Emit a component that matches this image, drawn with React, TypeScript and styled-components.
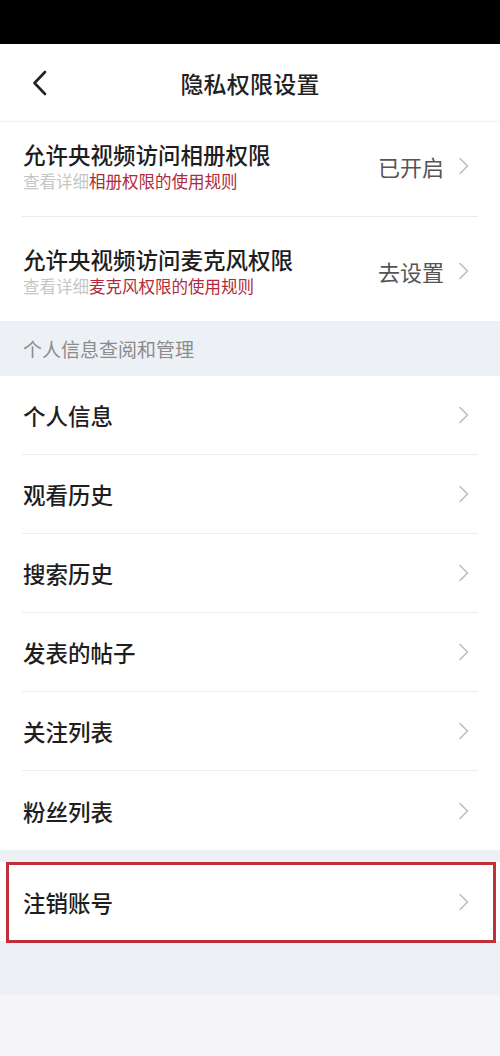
import React from "react";
import styled, { createGlobalStyle } from "styled-components";

const GlobalStyle = createGlobalStyle`
  html, body { margin: 0; padding: 0; }
  body {
    font-family: "Noto Sans CJK SC", "Noto Sans", sans-serif;
    background: #f5f5f7;
    -webkit-font-smoothing: antialiased;
  }
`;

const Page = styled.div`
  width: 500px;
  min-height: 1056px;
  display: flex;
  flex-direction: column;
  background: #f5f5f7;
`;

const StatusBar = styled.div`
  height: 44px;
  background: #000;
`;

const Header = styled.header`
  height: 77px;
  display: flex;
  align-items: center;
  justify-content: center;
  position: relative;
  background: #fff;
  border-bottom: 1px solid #f2f2f2;
`;

const BackButton = styled.button`
  position: absolute;
  left: 26px;
  top: 50%;
  transform: translateY(-50%);
  width: 28px;
  height: 36px;
  padding: 0;
  border: 0;
  background: transparent;
  display: flex;
  align-items: center;
  justify-content: center;
`;

const Title = styled.h1`
  margin: 0;
  font-size: 23px;
  font-weight: 500;
  color: #222;
  letter-spacing: 0.2px;
`;

const Group = styled.section`
  background: #fff;
  padding: 0 22px;
`;

const PermRow = styled.div<{ $pt: number; $pb: number; $h: number; $divider?: boolean }>`
  height: ${(p) => p.$h}px;
  box-sizing: border-box;
  padding: ${(p) => p.$pt}px 8px ${(p) => p.$pb}px 1px;
  display: flex;
  align-items: center;
  border-bottom: ${(p) => (p.$divider ? "1px solid #ececec" : "0")};
`;

const PermText = styled.div`
  flex: 1;
  display: flex;
  flex-direction: column;
`;

const PermTitle = styled.div`
  font-size: 22.5px;
  font-weight: 500;
  color: #1e1e1e;
  line-height: 26px;
`;

const PermSub = styled.div`
  font-size: 16.5px;
  line-height: 22px;
  color: #c6c6c6;
  margin-top: 3px;
`;

const RuleLink = styled.span`
  color: #b02a3b;
`;

const Value = styled.span`
  font-size: 22px;
  color: #555;
  margin-right: 14px;
`;

const SectionHeader = styled.div`
  height: 55px;
  display: flex;
  align-items: center;
  padding-left: 23px;
  background: #edf0f5;
  font-size: 19px;
  color: #8c8c8c;
`;

const ListRow = styled.div<{ $divider?: boolean }>`
  height: 79px;
  box-sizing: border-box;
  display: flex;
  align-items: center;
  padding: 0 8px 0 1px;
  border-bottom: ${(p) => (p.$divider ? "1px solid #ededed" : "0")};
`;

const ListLabel = styled.span`
  flex: 1;
  font-size: 22.5px;
  font-weight: 500;
  color: #1e1e1e;
`;

const Gap = styled.div<{ $h: number }>`
  height: ${(p) => p.$h}px;
  background: #edf0f5;
`;

const DangerGroup = styled(Group)`
  position: relative;
`;

const Highlight = styled.div`
  position: absolute;
  left: 6px;
  right: 4px;
  top: 0;
  bottom: -2px;
  border: 3px solid #c22f3b;
  pointer-events: none;
`;

const Filler = styled.div`
  flex: 1;
  background: #f5f5f7;
`;

const Chevron = () => (
  <svg width="12" height="18" viewBox="0 0 12 18" fill="none">
    <path d="M2 1.5 L9.5 9 L2 16.5" stroke="#bdbdbd" strokeWidth="1.6" strokeLinecap="round" strokeLinejoin="round" />
  </svg>
);

const BackIcon = () => (
  <svg width="16" height="26" viewBox="0 0 16 26" fill="none">
    <path d="M13 2 L2.5 13 L13 24" stroke="#222" strokeWidth="2.6" strokeLinecap="round" strokeLinejoin="round" />
  </svg>
);

const items = ["个人信息", "观看历史", "搜索历史", "发表的帖子", "关注列表", "粉丝列表"];

export default function App() {
  return (
    <>
      <GlobalStyle />
      <Page>
        <StatusBar />
        <Header>
          <BackButton aria-label="返回">
            <BackIcon />
          </BackButton>
          <Title>隐私权限设置</Title>
        </Header>
        <Group>
          <PermRow $h={95} $pt={0} $pb={6} $divider>
            <PermText>
              <PermTitle>允许央视频访问相册权限</PermTitle>
              <PermSub>
                查看详细<RuleLink>相册权限的使用规则</RuleLink>
              </PermSub>
            </PermText>
            <Value>已开启</Value>
            <Chevron />
          </PermRow>
          <PermRow $h={104} $pt={4} $pb={0}>
            <PermText>
              <PermTitle>允许央视频访问麦克风权限</PermTitle>
              <PermSub>
                查看详细<RuleLink>麦克风权限的使用规则</RuleLink>
              </PermSub>
            </PermText>
            <Value>去设置</Value>
            <Chevron />
          </PermRow>
        </Group>
        <SectionHeader>个人信息查阅和管理</SectionHeader>
        <Group>
          {items.map((label, i) => (
            <ListRow key={label} $divider={i < items.length - 1}>
              <ListLabel>{label}</ListLabel>
              <Chevron />
            </ListRow>
          ))}
        </Group>
        <Gap $h={12} />
        <DangerGroup>
          <ListRow>
            <ListLabel>注销账号</ListLabel>
            <Chevron />
          </ListRow>
          <Highlight />
        </DangerGroup>
        <Gap $h={54} />
        <Filler />
      </Page>
    </>
  );
}
